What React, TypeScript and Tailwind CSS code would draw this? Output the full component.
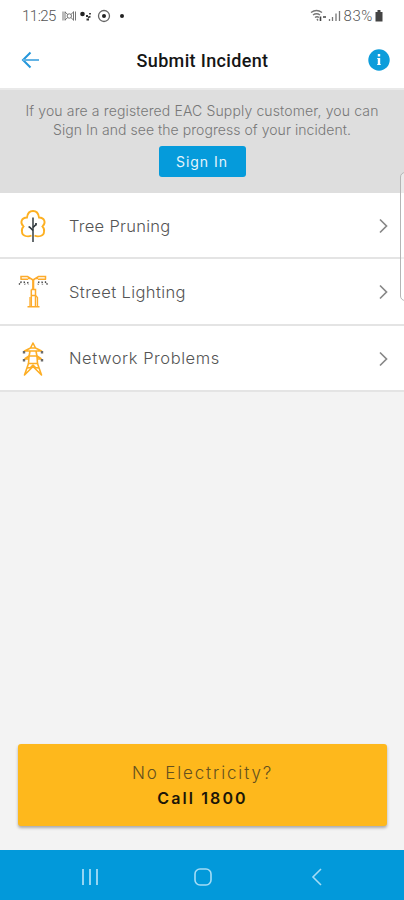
import type { ReactNode } from 'react';

const TreeIcon = () => (
  <svg width="28" height="34" viewBox="0 0 28 34" fill="none" className="shrink-0">
    <path
      d="M12.500 26.500C9 28.500 3 27 3 23C2.500 21 2.500 19.500 4.500 17.500C.5 14 2.500 8.500 8 8.500C9 -.2 19 -.2 20 8.500C25.500 8.500 27.500 14 23.500 17.500C25.500 19.500 25.500 21 25 23C25 27 19 28.500 15.500 26.500"
      stroke="#fdb022"
      strokeWidth="1.800"
    />
    <path d="M14 8.500V33" stroke="#4c5356" strokeWidth="1.700" />
    <path d="M14 21.500L10.500 18M14 18.500L17.500 15M9.500 18h1.500M17 14v2.500" stroke="#2d363b" strokeWidth="1.700" />
  </svg>
);

const StreetLightIcon = () => (
  <svg width="32" height="34" viewBox="0 0 32 34" fill="none" className="shrink-0">
    <g stroke="#fdab2b" strokeWidth="1.500">
      <path d="M4 4.500V1.500H10.500L16 5L21.500 1.500H28.500V4.500M3.500 4.200h7.500M21 4.200h8M11 3.500h2M19 3.500h2" />
      <path d="M16.200 4.500v10" strokeWidth="2.200" />
      <path d="M14.300 14.500h4.200V31M14.300 14.500V31M10.500 31.800h12" />
      <path d="M14.500 20.500h4l2 2V31M13 31V22" strokeWidth="1.300" />
    </g>
    <path d="M4.500 6.500l-2.500 3M7 6.500l1 3M10.500 7l1 2.500M22 6.500l-1 3M25 6.500l.5 3M28 6.500l2.500 3" stroke="#444" strokeWidth="1.400" strokeDasharray="1.600 .8" />
  </svg>
);

const PylonIcon = () => (
  <svg width="24" height="34" viewBox="0 0 24 34" fill="none" className="shrink-0">
    <g stroke="#fdae25" strokeWidth="1.600" strokeLinejoin="round">
      <path d="M12 1L9.500 6L3.500 9H20.500L14.500 6L12 1zM9 9l-1 5.500M15 9l1 5.500M9.500 6h5" />
      <path d="M3.500 17L8 14h8l4.500 3M8 14.500L7.500 21.500h9L16 14.500M3.500 17h4M16.500 17h4" />
      <path d="M7.500 21.500L3.500 33l8.500-8.500L20.500 33l-4-11.500M6.500 26l3-.5 2.500-2.500 2.500 2.500 3 .5" />
    </g>
    <path d="M3 9v2.500M21 9v2.500M3 17v2.500M21 17v2.500" stroke="#6b6b6b" strokeWidth="2.400" />
  </svg>
);

const items: { label: string; icon: ReactNode; text: string }[] = [
  { label: 'Tree Pruning', icon: <TreeIcon />, text: 'tracking-[0.28px]' },
  { label: 'Street Lighting', icon: <StreetLightIcon />, text: 'tracking-[0.4px]' },
  { label: 'Network Problems', icon: <PylonIcon />, text: 'tracking-[0.56px]' },
];

function StatusBar() {
  return (
    <div className="flex h-8 items-center pl-[22px] pr-[21px] font-[Roboto,sans-serif] text-[15px] font-light text-[#555]">
      <span className="tracking-[-0.5px]">11:25</span>
      <svg className="ml-[6px]" width="66" height="14" viewBox="0 0 66 14" fill="none" stroke="#666">
        <path d="M1 2.500v9M3 2.500v9M11.500 2.500v9M13.500 2.500v9M3 3l8.500 8M11.500 3L3 11" strokeWidth="0.900" />
        <circle cx="7.300" cy="7" r="2.200" fill="#fff" strokeWidth="0.900" />
        <circle cx="20.500" cy="5" r="2.300" fill="#222" stroke="none" />
        <path d="M24 7h2M24.500 10.500h2.500M28 4v1.500M26 8.500l2.500-1" stroke="#333" strokeWidth="1.800" />
        <circle cx="42" cy="7" r="5.500" strokeWidth="1.300" />
        <circle cx="42" cy="7" r="2" fill="#222" stroke="none" />
        <circle cx="60" cy="7" r="2" fill="#222" stroke="none" />
      </svg>
      <svg className="ml-auto" width="32" height="14" viewBox="0 0 32 14" fill="none" stroke="#777">
        <path d="M1 3.500Q6.500-.5 12 3.500M3 6q3.500-2.500 7 0M5 8.500q2-1.500 4 0M7 10l1 1.500" strokeWidth="1.400" />
        <path d="M10.500 7.500V12M13 8h3" stroke="#444" strokeWidth="1.600" />
        <path d="M19.500 12v-2M22.500 12V8M26 12V4.500M29.500 12V2" strokeWidth="1.300" />
      </svg>
      <span className="ml-px tracking-[0.6px]">83%</span>
      <svg className="ml-[2px]" width="8" height="12" viewBox="0 0 8 12" fill="#444">
        <path d="M2.500 0h3v2H7.500V11.500H.5V2H2.500z" />
      </svg>
    </div>
  );
}

function Header() {
  return (
    <header className="flex h-14 items-center justify-between pl-[21px] pr-[14px]">
      <svg width="20" height="18" viewBox="0 0 20 18" fill="none" stroke="#2497db">
        <path d="M9.500 1.500L2 9l7.500 7.500" strokeWidth="2" />
        <path d="M2 9h16" stroke="#64b4e5" strokeWidth="2" />
      </svg>
      <h1 className="mr-[4px] font-[Roboto,sans-serif] text-[18px] font-medium tracking-[0.35px] text-[#151515]">Submit Incident</h1>
      <svg width="22" height="22" viewBox="0 0 22 22">
        <circle cx="11" cy="11" r="10.700" fill="#0d9ddb" />
        <path d="M11 5v2.500M11 9v7" stroke="#fff" strokeWidth="2.400" fill="none" />
        <path d="M9.300 9.500h1.700M9.300 15.500h3.400" stroke="#fff" strokeWidth="1.200" />
      </svg>
    </header>
  );
}

export default function App() {
  return (
    <div className="relative flex h-[900px] w-[404px] flex-col overflow-hidden bg-[#f3f3f3] font-[Inter,sans-serif] font-light">
      <div className="bg-white">
        <StatusBar />
        <Header />
      </div>

      {/* Sign in banner */}
      <section className="flex h-[105px] flex-col items-center border-t-2 border-[#e9e9e9] bg-[#dedede] pt-[11px] text-[14px] leading-[20px] text-[#777]">
        <p className="whitespace-nowrap tracking-[0.13px]">If you are a registered EAC Supply customer, you can</p>
        <p className="-mt-px whitespace-nowrap tracking-[0.05px]">Sign In and see the progress of your incident.</p>
        <button className="mt-[6px] h-[31px] w-[87px] shrink-0 rounded-[3px] bg-[#059bdb] text-[14px] font-normal tracking-[0.95px] text-[#e4f4fc]">
          Sign In
        </button>
      </section>

      {/* Incident types */}
      <ul className="bg-white">
        {items.map((item) => (
          <li key={item.label} className="flex h-[66.300px] items-center border-b-2 border-[#e4e4e4] pr-[15px] pt-[2px]">
            <div className="flex w-[66px] justify-center">{item.icon}</div>
            <span className={`ml-[3px] whitespace-nowrap text-[16.500px] text-[#555] ${item.text}`}>{item.label}</span>
            <svg className="ml-auto" width="10" height="16" viewBox="0 0 10 16" fill="none">
              <path d="M1 1.500L7.500 8L1 14.500" stroke="#888" strokeWidth="1.700" />
            </svg>
          </li>
        ))}
      </ul>

      {/* Edge panel handle */}
      <div className="absolute left-[400px] top-[172px] h-[129px] w-3 rounded-l-[5px] border border-[#b5b5b5] bg-white/40" />

      <button className="ml-[18px] mr-[17px] mb-[24px] mt-auto flex h-[82px] flex-col items-center rounded-[3px] bg-[#feb81c] pt-[17px] shadow-[0_2px_3px_rgba(0,0,0,0.3)]">
        <span className="text-[17px] leading-[25px] tracking-[1.850px] text-[#64501f]">No Electricity?</span>
        <span className="text-[16px] font-semibold leading-[25px] tracking-[2.100px] text-[#1c1608]">Call 1800</span>
      </button>

      <nav className="h-[50px] shrink-0 bg-[#0299da]">
        <svg width="404" height="50" viewBox="0 0 404 50" fill="none" stroke="#a5dcf5">
          <path d="M83 19v16M90 19v16M97 19v16" strokeWidth="1.800" />
          <rect x="195" y="19" width="16" height="16" rx="5" strokeWidth="1.600" />
          <path d="M321 19l-8 8 8 8" strokeWidth="1.600" />
        </svg>
      </nav>
    </div>
  );
}
